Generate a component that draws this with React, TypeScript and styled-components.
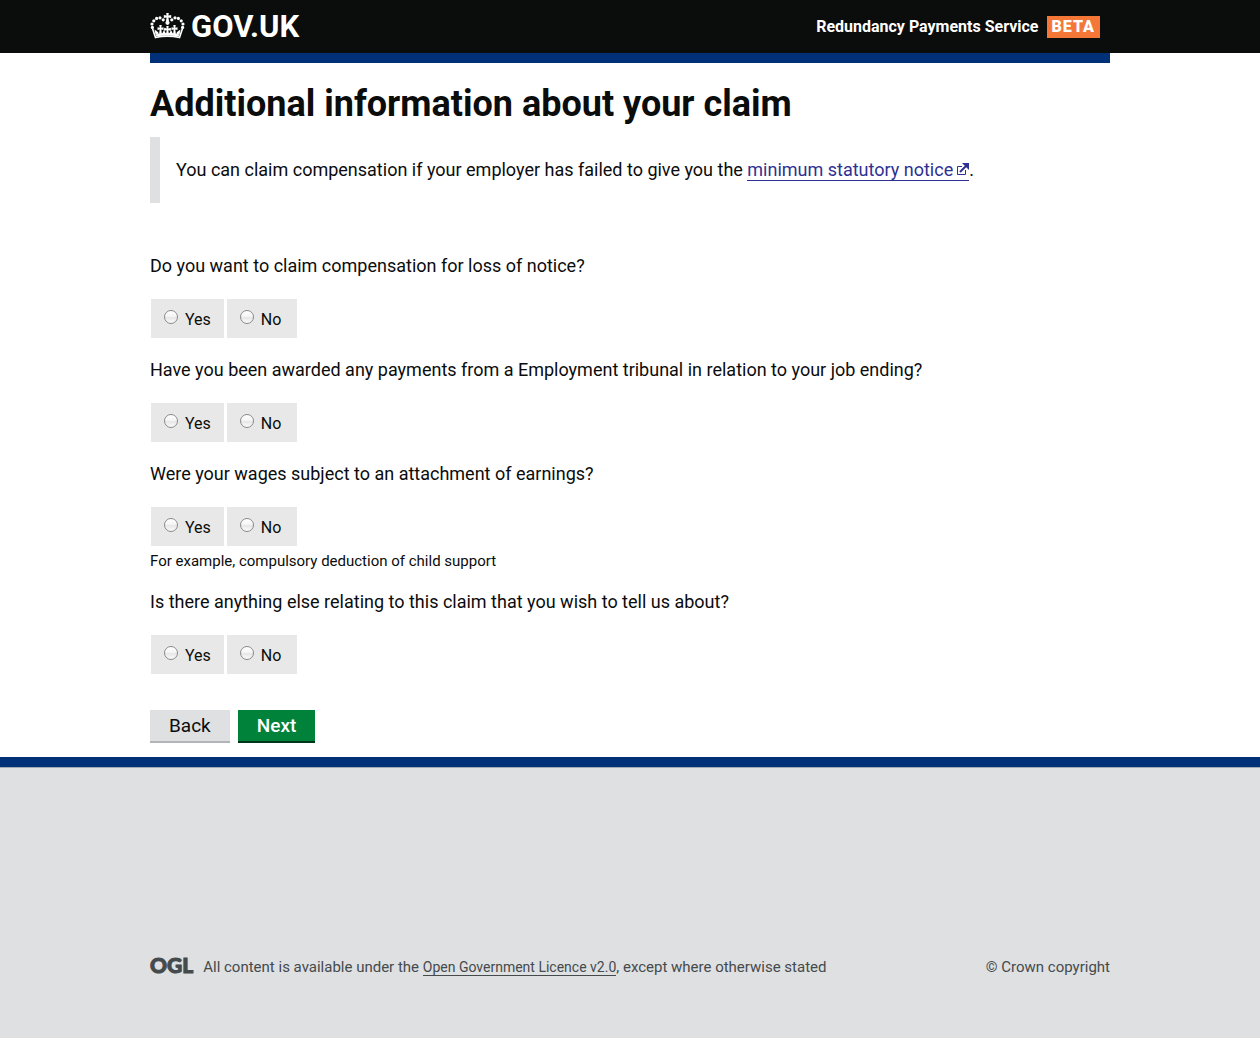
import React from "react";
import styled, { createGlobalStyle } from "styled-components";

const GlobalStyle = createGlobalStyle`
  *, *::before, *::after { box-sizing: border-box; }
  body {
    margin: 0;
    background: #fff;
    color: #0b0c0c;
    font-family: Roboto, "Liberation Sans", sans-serif;
    font-size: 18px;
    line-height: 25px;
  }
`;

const Page = styled.div`
  display: flex;
  flex-direction: column;
  min-height: 100vh;
`;

const Container = styled.div`
  width: 100%;
  max-width: 960px;
  margin: 0 auto;
`;

const Header = styled.header`
  background: #0b0c0c;
  color: #fff;
`;

const HeaderRow = styled(Container)`
  display: flex;
  align-items: center;
  justify-content: space-between;
  height: 53px;
  padding-right: 10px;
`;

const HomeLink = styled.a`
  display: flex;
  align-items: center;
  gap: 6px;
  color: #fff;
  font-size: 31px;
  line-height: 36px;
  font-weight: 700;
  text-decoration: none;
`;

const Service = styled.div`
  display: flex;
  align-items: center;
  gap: 8px;
  font-size: 16px;
  font-weight: 700;
`;

const Phase = styled.strong`
  padding: 0 5px;
  background: #f47738;
  line-height: 22px;
  letter-spacing: 1px;
`;

const BlueBar = styled(Container)`
  height: 10px;
  background: #003078;
`;

const Main = styled(Container)`
  padding: 21px 0 14px;
`;

const Title = styled.h1`
  margin: 0 0 13px;
  font-size: 36px;
  line-height: 40px;
  font-weight: 700;
`;

const Inset = styled.p`
  margin: 0 0 50px;
  padding: 20px 16px 21px;
  border-left: 10px solid #dee0e2;
`;

const ExternalLink = styled.a`
  color: #2e3191;
  text-decoration: none;
  border-bottom: 1px solid #2e3191;

  svg { margin-left: 3px; }
`;

const Question = styled.fieldset`
  margin: 0 0 19px;
  padding: 0;
  border: 0;
  min-width: 0;
`;

const Legend = styled.legend`
  padding: 0;
  margin-bottom: 21px;
`;

const Choices = styled.div`
  display: flex;
  gap: 3px;
  padding-left: 1px;
`;

const Choice = styled.label`
  display: flex;
  align-items: center;
  gap: 7px;
  min-width: 70px;
  height: 39px;
  padding: 1px 13px 0;
  background: #e8e8e8;
  font-size: 16px;
`;

const Radio = styled.input`
  appearance: none;
  width: 14px;
  height: 14px;
  margin: 0 0 5px;
  border: 1px solid #8a8a8a;
  border-radius: 50%;
  background: linear-gradient(#fff, #f4f4f4 50%, #e6e6e6 51%, #fafafa);
  &:checked { background: radial-gradient(#222 35%, #f4f4f4 40%); }
`;

const Hint = styled.p`
  margin: 0;
  padding-top: 6px;
  font-size: 15px;
  line-height: 18px;
`;

const Actions = styled.div`
  display: flex;
  gap: 8px;
  padding-top: 17px;
`;

const Button = styled.button<{ $primary?: boolean }>`
  padding: 3px 19px;
  border: 0;
  border-bottom: 2px solid ${(p) => (p.$primary ? "#003618" : "#b1b5b9")};
  background: ${(p) => (p.$primary ? "#00823b" : "#dee0e2")};
  color: ${(p) => (p.$primary ? "#fff" : "#0b0c0c")};
  font: inherit;
  font-size: 19px;
  font-weight: ${(p) => (p.$primary ? 500 : 400)};
  cursor: pointer;
`;

const Footer = styled.footer`
  flex: 1;
  padding: 185px 0 54px;
  border-top: 10px solid #003078;
  background: #dee0e2;
  box-shadow: inset 0 1px 0 #a1acb2;
  color: #454a4c;
  font-size: 15px;
`;

const FooterRow = styled(Container)`
  display: flex;
  align-items: center;
  justify-content: space-between;
`;

const Licence = styled.div`
  display: flex;
  align-items: center;
  gap: 10px;
`;

const Ogl = styled.span`
  padding-bottom: 6px;
  font-family: Lato, sans-serif;
  font-size: 21px;
  font-weight: 900;
  -webkit-text-stroke: 1px #454a4c;
`;

const LicenceLink = styled.a`
  color: inherit;
  font-size: 14px;
  text-decoration: none;
  border-bottom: 1px solid #454a4c;
`;

const Crown = () => (
  <svg width="35" height="28" viewBox="0 0 35 28" fill="#fff" aria-hidden="true">
    <path d="M16.200 0h2.600l-.4 2.600 2.800-.5v3l-2.800-.5.6 3.400h-3l.6-3.400-2.800.5v-3l2.800.5z" />
    <circle cx="17.500" cy="9.800" r="2.100" />
    {[[13.2, 6.8], [10, 4.800], [6.600, 5.400], [3.800, 7.800], [2, 11], [2.400, 14.400]].map(([x, y]) => (
      <React.Fragment key={y}>
        <circle cx={x} cy={y} r="1.600" />
        <circle cx={35 - x} cy={y} r="1.600" />
      </React.Fragment>
    ))}
    <path d="M2.500 15.500l3 9c7-1.600 17-1.600 24 0l3-9" fill="none" stroke="#fff" strokeWidth="1.600" />
    <path d="M5.500 21.500c7.500-1.600 16.500-1.600 24 0l-.8 2c-7-1.400-15.400-1.400-22.400 0z" />
    <path d="M9.300 12h2.400l-.4 2.800 2.200-.6v2.800l-2.200-.5.6 4.500H9.100l.6-4.500-2.200.5v-2.800l2.200.6z" />
    <path d="M23.300 12h2.400l-.4 2.800 2.200-.6v2.800l-2.200-.5.6 4.500h-2.800l.6-4.500-2.200.5v-2.800l2.200.6z" />
    <path d="M16.300 13h2.400l-.4 2.400 2.600-.6v3l-2.600-.6.6 3.800h-2.800l.6-3.800-2.600.6v-3l2.600.6z" />
    <path d="M4.500 16.500l3.500 2.500 1 2.500H5.500zM30.500 16.500l-3.500 2.500-1 2.500h3.500zM12 21l2-4 2 4zM19 21l2-4 2 4z" />
  </svg>
);

const ExternalIcon = () => (
  <svg width="13" height="13" viewBox="0 0 13 13" fill="none" stroke="#2e3191" aria-hidden="true">
    <path d="M6 3.500H1.500v8h8V7" />
    <path d="M4 9l6-6" strokeWidth="2" />
    <path d="M6 0h7v7z" fill="#2e3191" stroke="none" />
  </svg>
);

const questions = [
  { id: "notice", text: "Do you want to claim compensation for loss of notice?" },
  { id: "tribunal", text: "Have you been awarded any payments from a Employment tribunal in relation to your job ending?" },
  { id: "earnings", text: "Were your wages subject to an attachment of earnings?", hint: "For example, compulsory deduction of child support" },
  { id: "other", text: "Is there anything else relating to this claim that you wish to tell us about?" },
];

export default function App() {
  return (
    <Page>
      <GlobalStyle />
      <Header>
        <HeaderRow>
          <HomeLink href="#"><Crown />GOV.UK</HomeLink>
          <Service>Redundancy Payments Service <Phase>BETA</Phase></Service>
        </HeaderRow>
      </Header>
      <BlueBar />
      <Main as="main">
        <Title>Additional information about your claim</Title>
        <Inset>
          You can claim compensation if your employer has failed to give you the{" "}
          <ExternalLink href="#">minimum statutory notice<ExternalIcon /></ExternalLink>.
        </Inset>
        <form onSubmit={(e) => e.preventDefault()}>
          {questions.map((q) => (
            <Question key={q.id}>
              <Legend>{q.text}</Legend>
              <Choices>
                {["Yes", "No"].map((c) => (
                  <Choice key={c} htmlFor={q.id + c}>
                    <Radio type="radio" id={q.id + c} name={q.id} value={c} />
                    {c}
                  </Choice>
                ))}
              </Choices>
              {q.hint && <Hint>{q.hint}</Hint>}
            </Question>
          ))}
          <Actions>
            <Button type="button">Back</Button>
            <Button type="submit" $primary>Next</Button>
          </Actions>
        </form>
      </Main>
      <Footer>
        <FooterRow>
          <Licence>
            <Ogl>OGL</Ogl>
            <span>
              All content is available under the <LicenceLink href="#">Open Government Licence v2.0</LicenceLink>, except where otherwise stated
            </span>
          </Licence>
          <span>© Crown copyright</span>
        </FooterRow>
      </Footer>
    </Page>
  );
}
